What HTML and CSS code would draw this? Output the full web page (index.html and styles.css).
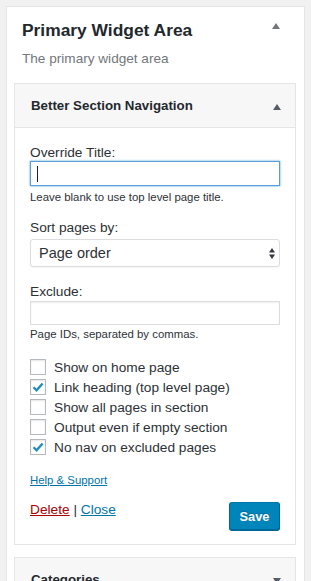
FILE: index.html
```html
<!DOCTYPE html>
<html>
<head>
<meta charset="utf-8">
<link rel="stylesheet" href="styles.css">
</head>
<body>
<div class="sidebar">
  <div class="sidebar-head">
    <h2 class="sidebar-title">Primary Widget Area</h2>
    <svg class="tri tri-light" width="8" height="6" viewBox="0 0 8 6"><path d="M0 6 L4 0 L8 6 Z"/></svg>
  </div>
  <p class="sidebar-desc">The primary widget area</p>

  <div class="widget">
    <div class="widget-top">
      <h3 class="widget-title">Better Section Navigation</h3>
      <svg class="tri" width="8" height="6" viewBox="0 0 8 6"><path d="M0 6 L4 0 L8 6 Z"/></svg>
    </div>
    <div class="widget-body">
      <div class="label">Override Title:</div>
      <div class="field field-focus"><span class="caret"></span></div>
      <div class="hint">Leave blank to use top level page title.</div>

      <div class="label label-gap">Sort pages by:</div>
      <div class="select">
        <span>Page order</span>
        <svg width="6" height="11" viewBox="0 0 6 11"><path d="M0 4.5 L3 0 L6 4.5 Z M0 6.5 L3 11 L6 6.5 Z"/></svg>
      </div>

      <div class="label label-gap2">Exclude:</div>
      <div class="field field-plain"></div>
      <div class="hint hint-tight">Page IDs, separated by commas.</div>

      <ul class="checks">
        <li><span class="box"></span>Show on home page</li>
        <li><span class="box"><svg width="14" height="14" viewBox="0 0 14 14"><path d="M2.5 7.2 L5.6 10.3 L11.6 3.6" /></svg></span>Link heading (top level page)</li>
        <li><span class="box"></span>Show all pages in section</li>
        <li><span class="box"></span>Output even if empty section</li>
        <li><span class="box"><svg width="14" height="14" viewBox="0 0 14 14"><path d="M2.5 7.2 L5.6 10.3 L11.6 3.6" /></svg></span>No nav on excluded pages</li>
      </ul>

      <a class="help" href="#">Help &amp; Support</a>

      <div class="actions">
        <div class="links"><a class="delete" href="#">Delete</a> | <a class="close" href="#">Close</a></div>
        <button class="save">Save</button>
      </div>
    </div>
  </div>

  <div class="widget widget-next">
    <div class="widget-top">
      <h3 class="widget-title">Categories</h3>
      <svg class="tri" width="8" height="6" viewBox="0 0 8 6"><path d="M0 0 L4 6 L8 0 Z"/></svg>
    </div>
  </div>
</div>
</body>
</html>
```

FILE: styles.css
```css
html, body {
  margin: 0;
  padding: 0;
  background: #f1f1f1;
  font-family: "Liberation Sans", Arial, sans-serif;
  color: #444;
  height: 581px;
  overflow: hidden;
}

.sidebar {
  margin: 6px 0 0 6px;
  width: 299px;
  box-sizing: border-box;
  background: #fff;
  border: 1px solid #e5e5e5;
  padding: 0 8px 0 7px;
  height: 660px;
}

.sidebar-head {
  display: flex;
  align-items: center;
  justify-content: space-between;
  padding: 11px 16px 0 8px;
}

.sidebar-title {
  margin: 0;
  font-size: 17.4px;
  line-height: 24px;
  font-weight: 700;
  color: #23282d;
}

.tri { fill: #555d66; }
.tri-light { fill: #72777c; margin-top: -8px; }

.sidebar-desc {
  margin: 8px 0 0 8px;
  font-size: 13.6px;
  line-height: 18px;
  color: #72777c;
}

.widget {
  margin-top: 15px;
  border: 1px solid #e5e5e5;
  background: #fff;
}

.widget-next { margin-top: 12px; }

.widget-top {
  display: flex;
  align-items: center;
  justify-content: space-between;
  height: 43px;
  padding: 0 14px 0 16px;
  background: #f7f7f7;
}

.widget-title {
  margin: 0;
  font-size: 13.3px;
  font-weight: 700;
  color: #23282d;
  line-height: 18px;
}

.widget-top .tri { margin-top: 2px; }

.widget-body {
  border-top: 1px solid #e5e5e5;
  padding: 15px 15px 14px 15px;
}

.label {
  font-size: 13.7px;
  line-height: 16px;
  padding-top: 2px;
  color: #2c3136;
}

.label-gap { margin-top: 13px; }
.label-gap2 { margin-top: 15px; }

.field {
  box-sizing: border-box;
  width: 250px;
  border: 1px solid #ddd;
  background: #fff;
  box-shadow: inset 0 1px 2px rgba(0,0,0,0.07);
  display: flex;
  align-items: center;
}

.field-focus {
  height: 25px;
  border-color: #5b9dd9;
  box-shadow: 0 0 2px rgba(30,140,190,0.8);
  padding-left: 6px;
}

.caret {
  display: block;
  width: 1px;
  height: 16px;
  background: #222;
}

.field-plain {
  height: 24px;
  margin-top: 1px;
}

.hint {
  margin-top: 3px;
  font-size: 11.4px;
  line-height: 15px;
  padding-top: 1px;
  color: #2c3136;
}

.hint-tight { margin-top: 1px; }

.select {
  box-sizing: border-box;
  width: 250px;
  height: 28px;
  margin-top: 3px;
  border: 1px solid #ddd;
  border-radius: 3px;
  background: #fff;
  box-shadow: 0 1px 1px rgba(0,0,0,0.04);
  display: flex;
  align-items: center;
  justify-content: space-between;
  padding: 0 4px 0 8px;
  font-size: 14.5px;
  color: #2c3136;
}

.select svg { fill: #32373c; }

.checks {
  list-style: none;
  margin: 15px 0 0 0;
  padding: 0;
}

.checks li {
  display: flex;
  align-items: center;
  height: 20px;
  font-size: 13.7px;
  color: #2c3136;
}

.box {
  box-sizing: border-box;
  width: 16px;
  height: 16px;
  border: 1px solid #b4b9be;
  background: #fff;
  box-shadow: inset 0 1px 2px rgba(0,0,0,0.1);
  margin-right: 8px;
  display: flex;
  align-items: center;
  justify-content: center;
}

.box svg path {
  fill: none;
  stroke: #1e8cbe;
  stroke-width: 2.3;
}

.help {
  display: block;
  margin-top: 15px;
  font-size: 11.4px;
  line-height: 16px;
  color: #0073aa;
  text-decoration: underline;
  width: max-content;
}

.actions {
  display: flex;
  justify-content: space-between;
  align-items: flex-start;
  margin-top: 14px;
}

.links {
  font-size: 13.7px;
  line-height: 18px;
  color: #2c3136;
  margin-top: -1px;
}

.delete { color: #a00; text-decoration: underline; }
.close { color: #0073aa; text-decoration: underline; }

.save {
  box-sizing: border-box;
  width: 51px;
  height: 28px;
  margin: 0;
  padding: 0;
  background: #0085ba;
  border: 1px solid #0073aa;
  border-color: #0073aa #006799 #006799;
  border-radius: 3px;
  box-shadow: 0 1px 0 #006799;
  color: #fff;
  font-family: "Liberation Sans", Arial, sans-serif;
  font-size: 12.8px;
  font-weight: 700;
  text-shadow: 0 -1px 1px #006799;
}
```
